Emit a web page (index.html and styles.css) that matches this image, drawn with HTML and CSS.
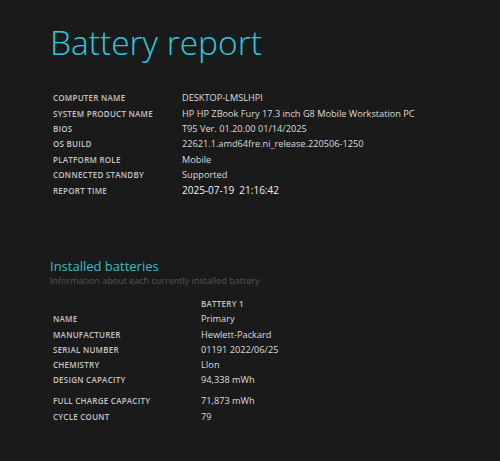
FILE: index.html
```html
<!DOCTYPE html>
<html>
<head>
<meta charset="utf-8">
<link rel="stylesheet" href="styles.css">
</head>
<body>
<main class="page">
  <h1 class="title">Battery report</h1>
  <table class="info">
    <tr><td class="label">Computer name</td><td class="value">DESKTOP-LMSLHPI</td></tr>
    <tr><td class="label">System product name</td><td class="value">HP HP ZBook Fury 17.3 inch G8 Mobile Workstation PC</td></tr>
    <tr><td class="label">BIOS</td><td class="value">T95 Ver. 01.20.00 01/14/2025</td></tr>
    <tr><td class="label">OS build</td><td class="value">22621.1.amd64fre.ni_release.220506-1250</td></tr>
    <tr><td class="label">Platform role</td><td class="value">Mobile</td></tr>
    <tr><td class="label">Connected standby</td><td class="value">Supported</td></tr>
    <tr><td class="label">Report time</td><td class="value datetime">2025-07-19 &nbsp;21:16:42</td></tr>
  </table>

  <h2 class="section">Installed batteries</h2>
  <div class="explanation">Information about each currently installed battery</div>
  <table class="batteries">
    <tr><td></td><td class="label">Battery 1</td></tr>
    <tr><td class="label">Name</td><td class="value">Primary</td></tr>
    <tr><td class="label">Manufacturer</td><td class="value">Hewlett-Packard</td></tr>
    <tr><td class="label">Serial number</td><td class="value">01191 2022/06/25</td></tr>
    <tr><td class="label">Chemistry</td><td class="value">LIon</td></tr>
    <tr class="gap"><td class="label">Design capacity</td><td class="value">94,338 mWh</td></tr>
    <tr><td class="label">Full charge capacity</td><td class="value">71,873 mWh</td></tr>
    <tr><td class="label">Cycle count</td><td class="value">79</td></tr>
  </table>
</main>
</body>
</html>
```

FILE: styles.css
```css
html, body {
  margin: 0;
  padding: 0;
  background: #1a1a1a;
  height: 100%;
}
.page {
  padding: 18px 0 0 50px;
  font-family: "Open Sans", "Noto Sans", sans-serif;
  color: #e6e6e6;
}
.title {
  margin: 0;
  font-weight: 300;
  font-size: 33.5px;
  line-height: 48px;
  color: #2ccbdf;
  letter-spacing: 0;
}
.info, .batteries {
  border-collapse: collapse;
  margin-left: 0;
}
.info {
  margin-top: 24px;
}
td {
  padding: 0 0 0 3px;
  height: 15.4px;
  white-space: nowrap;
}
.label {
  font-size: 8px;
  font-weight: 600;
  text-transform: uppercase;
  color: #c4c4c4;
  letter-spacing: 0.25px;
}
.info .label { width: 126px; }
.batteries .label:first-child { width: 145px; }
.value {
  font-size: 9.2px;
  font-weight: 400;
  color: #dcdcdc;
}
.datetime {
  font-size: 10px;
  color: #f0f0f0;
}
.section {
  margin: 59px 0 0 0;
  font-weight: 500;
  font-size: 13px;
  line-height: 18px;
  color: #36bec6;
}
.explanation {
  font-size: 9px;
  color: #555;
  line-height: 12px;
  font-weight: 400;
}
.batteries {
  margin-top: 9px;
}
.gap td { height: 20.5px; vertical-align: top; padding-top: 0; }
.gap td.label { padding-top: 1px; height: 19.5px; }
```
